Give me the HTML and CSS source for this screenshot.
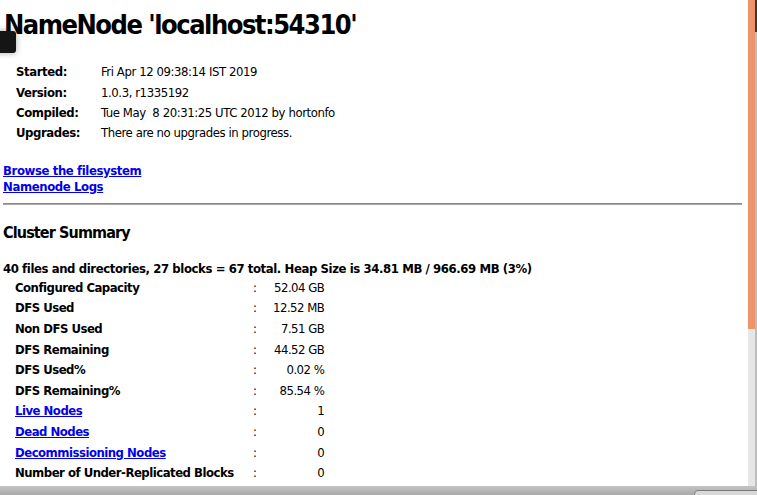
FILE: index.html
```html
<!DOCTYPE html>
<html>
<head>
<meta charset="utf-8">
<link rel="stylesheet" href="styles.css">
</head>
<body>
<div class="screen">
  <div class="viewport">
    <div class="page">
      <h1 class="title">NameNode 'localhost:54310'</h1>
      <table class="info">
        <tr><td class="lbl">Started:</td><td>Fri Apr 12 09:38:14 IST 2019</td></tr>
        <tr><td class="lbl">Version:</td><td>1.0.3, r1335192</td></tr>
        <tr><td class="lbl">Compiled:</td><td>Tue May &nbsp;8 20:31:25 UTC 2012 by hortonfo</td></tr>
        <tr><td class="lbl">Upgrades:</td><td>There are no upgrades in progress.</td></tr>
      </table>
      <div class="links">
        <a href="#">Browse the filesystem</a><br>
        <a href="#">Namenode Logs</a>
      </div>
      <hr class="rule">
      <h3 class="section">Cluster Summary</h3>
      <div class="totals">40 files and directories, 27 blocks = 67 total. Heap Size is 34.81 MB / 966.69 MB (3%)</div>
      <table class="summary">
        <tr><td class="lbl">Configured Capacity</td><td class="colon">:</td><td class="val">52.04 GB</td></tr>
        <tr><td class="lbl">DFS Used</td><td class="colon">:</td><td class="val">12.52 MB</td></tr>
        <tr><td class="lbl">Non DFS Used</td><td class="colon">:</td><td class="val">7.51 GB</td></tr>
        <tr><td class="lbl">DFS Remaining</td><td class="colon">:</td><td class="val">44.52 GB</td></tr>
        <tr><td class="lbl">DFS Used%</td><td class="colon">:</td><td class="val">0.02 %</td></tr>
        <tr><td class="lbl">DFS Remaining%</td><td class="colon">:</td><td class="val">85.54 %</td></tr>
        <tr><td class="lbl"><a href="#">Live Nodes</a></td><td class="colon">:</td><td class="val">1</td></tr>
        <tr><td class="lbl"><a href="#">Dead Nodes</a></td><td class="colon">:</td><td class="val">0</td></tr>
        <tr><td class="lbl"><a href="#">Decommissioning Nodes</a></td><td class="colon">:</td><td class="val">0</td></tr>
        <tr><td class="lbl">Number of Under-Replicated Blocks</td><td class="colon">:</td><td class="val">0</td></tr>
      </table>
    </div>
    <div class="tab"></div>
  </div>
  <div class="scrollbar"><div class="thumb"></div></div>
  <div class="edge"><div class="edge-top"></div></div>
  <div class="statusbar"><div class="pill"></div></div>
</div>
</body>
</html>
```

FILE: styles.css
```css
html, body {
  margin: 0;
  padding: 0;
  background: #ffffff;
}
body {
  font-family: "DejaVu Sans Condensed", "DejaVu Sans", sans-serif;
  font-stretch: condensed;
  color: #000;
  overflow: hidden;
}
.screen {
  width: 757px;
  height: 495px;
  display: grid;
  grid-template-columns: 748px 7px 2px;
  grid-template-rows: 486px 9px;
  overflow: hidden;
}
.viewport {
  grid-column: 1;
  grid-row: 1;
  position: relative;
  overflow: hidden;
  background: #ffffff;
}
.page {
  padding: 0 6px 0 3px;
}
.title {
  margin: 0;
  padding-top: 7px;
  padding-left: 1px;
  font-size: 27px;
  line-height: 36px;
  font-weight: bold;
  letter-spacing: -1.5px;
}
.tab {
  position: absolute;
  left: -6px;
  top: 31px;
  width: 22px;
  height: 22px;
  background: #151515;
  border-radius: 3px;
  box-shadow: 0 0 6px rgba(0,0,0,0.35);
}
.info {
  border-collapse: collapse;
  margin: 19px 0 0 13px;
  font-size: 13px;
  letter-spacing: -0.42px;
}
.info td {
  padding: 0;
  height: 20.4px;
  line-height: 16px;
  vertical-align: middle;
}
.info .lbl {
  font-weight: bold;
  width: 85px;
}
.links {
  margin-top: 19px;
  font-size: 13px;
  line-height: 16px;
  font-weight: bold;
  letter-spacing: -0.4px;
}
a {
  color: #0000ee;
  text-decoration: underline;
}
.rule {
  margin: 8px 0 0 0;
  border: 0;
  border-top: 1px solid #8a8a8a;
  border-bottom: 1px solid #a8a8a8;
  height: 0;
}
.section {
  margin: 18px 0 0 0;
  font-size: 16px;
  line-height: 20px;
  font-weight: bold;
  letter-spacing: -0.87px;
}
.totals {
  margin-top: 18px;
  font-size: 13px;
  line-height: 16px;
  font-weight: bold;
  letter-spacing: -0.41px;
}
.summary {
  border-collapse: collapse;
  margin: 1px 0 0 12px;
  font-size: 13px;
  letter-spacing: -0.5px;
}
.summary td {
  padding: 0;
  height: 20.6px;
  line-height: 16px;
}
.summary .lbl {
  font-weight: bold;
  width: 238px;
  white-space: nowrap;
}
.summary .colon {
  width: 20px;
}
.summary .val {
  text-align: right;
  white-space: nowrap;
}
.scrollbar {
  grid-column: 2;
  grid-row: 1;
  background: #e6e6e6;
}
.thumb {
  height: 329px;
  background: #f0956b;
}
.edge {
  grid-column: 3;
  grid-row: 1;
  background: #bdbdbd;
}
.edge-top {
  height: 32px;
  background: #3a3935;
}
.statusbar {
  grid-column: 1 / 4;
  grid-row: 2;
  background: linear-gradient(#c4c4c4, #a9a9a9);
  position: relative;
}
.pill {
  position: absolute;
  left: 694px;
  top: 4px;
  width: 80px;
  height: 14px;
  border: 1px solid #7a7a7a;
  border-radius: 4px;
  background: #d8d8d8;
}
```
